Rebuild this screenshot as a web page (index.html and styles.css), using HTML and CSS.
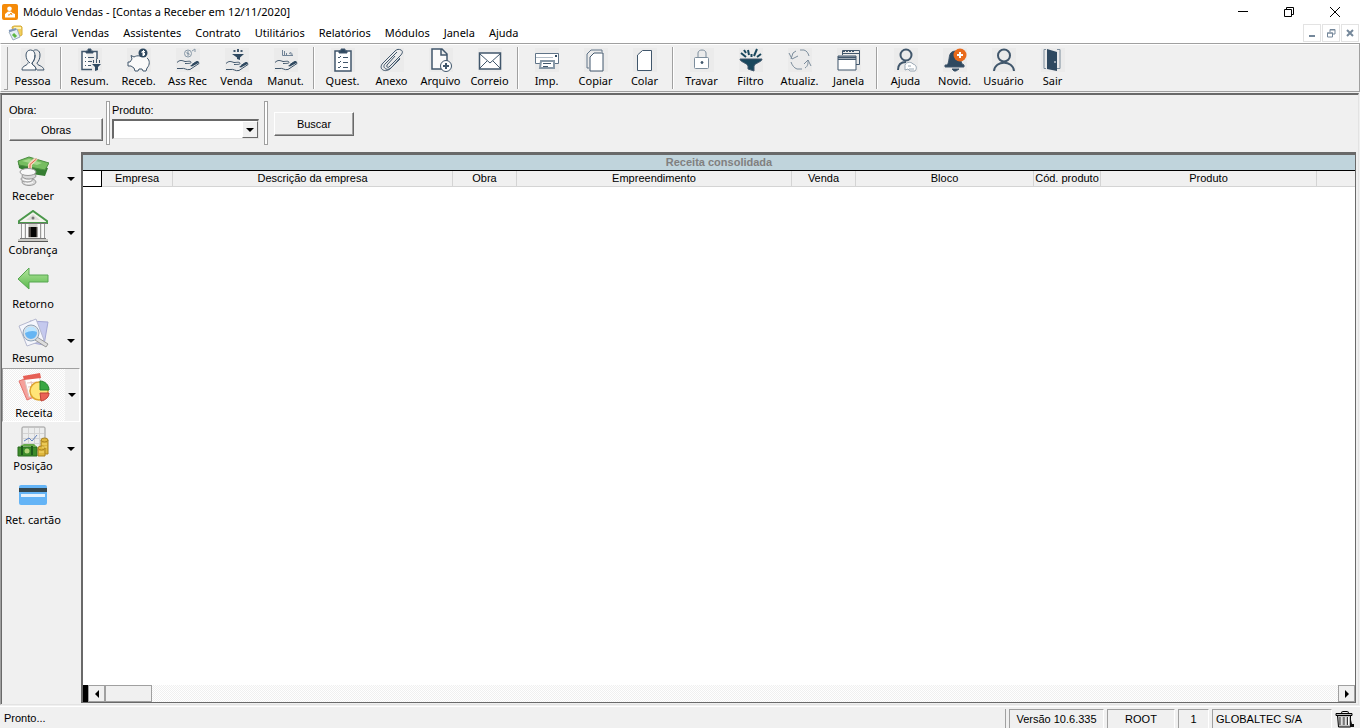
FILE: index.html
```html
<!DOCTYPE html>
<html lang="pt-BR">
<head>
  <meta charset="UTF-8">
  <meta name="viewport" content="width=device-width, initial-scale=1.0">
  <title>Módulo Vendas</title>
  <link rel="stylesheet" href="styles.css">
</head>
<body>
  <header class="titlebar">
    <svg class="app-icon" viewBox="0 0 16 16">
      <rect width="16" height="16" rx="2" fill="#f58a07"/>
      <circle cx="7.5" cy="4.8" r="2.3" fill="#fff"/>
      <path d="M3 13.500V10l3-2.600h3l1.500 1.600 2.500 1v3.500z" fill="#fff"/>
      <path d="M6 11h1.500l1.500-2 1 2" fill="none" stroke="#f58a07"/>
    </svg>
    <h1>Módulo Vendas - [Contas a Receber em 12/11/2020]</h1>
    <div class="window-buttons">
      <button aria-label="Minimizar"><svg viewBox="0 0 12 12"><path d="M1 5.500h10" /></svg></button>
      <button aria-label="Restaurar"><svg viewBox="0 0 12 12"><path d="M1.500 3.500h7v7h-7zM3.500 3.500v-2h7v7h-2"/></svg></button>
      <button aria-label="Fechar"><svg viewBox="0 0 12 12"><path d="M1 1l10 10M11 1L1 11"/></svg></button>
    </div>
  </header>

  <nav class="menubar">
    <svg class="menu-icon" viewBox="0 0 16 16">
      <path d="M4 2l2-1h7l1 1v8l-2 1H6z" fill="#f1cf5b" stroke="#d6ac3c"/>
      <path d="M6 3h7" stroke="#fff3b5" stroke-width="2"/>
      <path d="M1 7l8-3 3 8-7 3z" fill="#e4edf5" stroke="#9baebe"/>
      <path d="M1 6l7-2" stroke="#7d94b8" stroke-width="2"/>
      <path d="M5 9l3 3" stroke="#5db743" stroke-width="3"/>
    </svg>
    <a href="#">Geral</a>
    <a href="#">Vendas</a>
    <a href="#">Assistentes</a>
    <a href="#">Contrato</a>
    <a href="#">Utilitários</a>
    <a href="#">Relatórios</a>
    <a href="#">Módulos</a>
    <a href="#">Janela</a>
    <a href="#">Ajuda</a>
    <div class="child-buttons">
      <button aria-label="Minimizar janela"><svg viewBox="0 0 10 10"><path d="M2 8h6" stroke-width="2"/></svg></button>
      <button aria-label="Restaurar janela"><svg viewBox="0 0 10 10"><path d="M1.500 5h5v4h-5zM1 5h6M4 4V1.500h5V6H7M4 2h5"/></svg></button>
      <button aria-label="Fechar janela"><svg viewBox="0 0 10 10"><path d="M2 2l6 6M8 2L2 8" stroke-width="2"/></svg></button>
    </div>
  </nav>

  <div class="toolbar">
    <button class="tool">
      <svg viewBox="0 0 24 24"><path d="M9 15c-3-2-4-5-4-8 0-3 2-5 4.500-5S14 4 14 7s-1 6-3 8c0 3 4 2 4 7H1c0-5 6-4 6-7.500" fill="#fafafa"/><path d="M12.500 2.500C15 1 19 2 19 7c0 3-1 6-3 8 0 3 6 2 7 7h-7M14 7c0 4-1 6-3 8 0 3 4 2 4 7"/></svg>
      <span>Pessoa</span>
    </button>
    <i class="sep"></i>
    <button class="tool">
      <svg viewBox="0 0 24 24"><path d="M8 3.500H4v18h10M15 3.500h4V11" fill="#fafafa" stroke-width="1.500"/><path class="fill" d="M8 3h2V1h3v2h2v2H8z"/><path d="M7 9.500h1M10 9.500h6M7 13.500h1M10 13.500h4M7 17.500h1M10 17.500h3"/><path class="fill" d="M14 16h9l-3 3v3l-3 1v-4z" stroke="none"/><path d="M18.500 11v4M15.500 12v3M21.500 12v3"/></svg>
      <span>Resum.</span>
    </button>
    <button class="tool">
      <svg viewBox="0 0 24 24"><path d="M13 8c-3-.500-4 0-6 1L4 7.500 5 11l-2 3H1v4h3l3 2 1 3h3l1-2h3l1 2h3l1-3c3-3 3-8 0-10" fill="#fafafa"/><circle class="fill" cx="16" cy="5" r="4.500" stroke="none"/><path d="M18 3.500h-3v1.500h2.500v2H15M16.500 2v6" stroke="#fff"/></svg>
      <span>Receb.</span>
    </button>
    <button class="tool">
      <svg viewBox="0 0 24 24"><circle cx="12" cy="5.500" r="3.500" stroke="#8798a7"/><path d="M13 4h-2v1.500h2V7h-2M16 3l3-2v3" stroke="#8798a7"/><path d="M1 14.500c3-3 5-2 8-1 3 0 6-1 6 1 0 1-3 1-6 1M1 20.500h4c4-1 5 2 9 1l9-6c0-2-2-2-4-1l-3 2"/><path class="fill" d="M14 18l6-4.500c2-1 3 0 2.500 1.500L16 18.500z" stroke="none"/></svg>
      <span>Ass Rec</span>
    </button>
    <button class="tool">
      <svg viewBox="0 0 24 24"><path class="fill" d="M7 6h12l-4 3.500V12l-3-1V9.500z" stroke="none"/><path d="M9.500 2v2M13 1v3M16.500 2v2" stroke-width="2"/><path d="M1 15.500c3-3 5-2 8-1 3 0 6-1 6 1 0 1-3 1-6 1M1 21.500h4c4-1 5 2 9 1l9-6c0-2-2-2-4-1l-3 2"/><path class="fill" d="M14 19l6-4.500c2-1 3 0 2.500 1.500L16 19.500z" stroke="none"/></svg>
      <span>Venda</span>
    </button>
    <button class="tool">
      <svg viewBox="0 0 24 24"><path d="M8.500 2v5.500H19M10.500 3v4M12.500 5v2M15 5.500l2-1v2M18 5.500v2" stroke="#718396"/><path d="M1 14.500c3-3 5-2 8-1 3 0 6-1 6 1 0 1-3 1-6 1M1 20.500h4c4-1 5 2 9 1l9-6c0-2-2-2-4-1l-3 2"/><path class="fill" d="M14 18l6-4.500c2-1 3 0 2.500 1.500L16 18.500z" stroke="none"/></svg>
      <span>Manut.</span>
    </button>
    <i class="sep"></i>
    <button class="tool">
      <svg viewBox="0 0 24 24"><path d="M4 3h16v20H4z" fill="#fff" stroke-width="1.500"/><path class="fill" d="M8 3h2V1h4v2h2v2H8z"/><path d="M7 9l1 1 2-2M12 9.500h5M7 14l1 1 2-2M12 14.500h5M7 19l1 1 2-2M12 19.500h5"/></svg>
      <span>Quest.</span>
    </button>
    <button class="tool">
      <svg viewBox="0 0 24 24"><path d="M15 8l-8 9c-1 2 1 3 2 2L20 8c3-3 3-5 1-6s-4-1-6 1L3 15c-3 3-2 6 0 7s5 1 8-2l9-9M17 4L5 16c-2 2-1 4 1 5s4 0 6-2l8-9"/></svg>
      <span>Anexo</span>
    </button>
    <button class="tool">
      <svg viewBox="0 0 24 24"><path d="M3 1h10l5 5v15H3zM12 1v6h6" fill="#fafafa" stroke-width="1.500"/><circle cx="17" cy="18" r="5.500" fill="#fff"/><path d="M14 18h6M17 15v6" stroke-width="2"/></svg>
      <span>Arquivo</span>
    </button>
    <button class="tool">
      <svg viewBox="0 0 24 24"><path d="M1.500 5h21v16h-21z" fill="#fff" stroke-width="1.500"/><path d="M2 6l10 9L22 6M2 20l7-7M22 20l-7-7"/></svg>
      <span>Correio</span>
    </button>
    <i class="sep"></i>
    <button class="tool">
      <svg viewBox="0 0 24 24"><path d="M5 15.500H.500v-10h23v10H19" fill="#fff" stroke="#607488"/><path d="M1 9.500h17" stroke="#b2bdc7"/><path class="fill" d="M20 7h2v2h-2z" stroke="none"/><path d="M6 13h13v7H5z" fill="#fff" stroke="#8798a7" stroke-width="2"/><path d="M8 15.500h8M8 18.500h5"/></svg>
      <span>Imp.</span>
    </button>
    <button class="tool">
      <svg viewBox="0 0 24 24"><path d="M5 20H3V6l4-4h11v2" stroke="#607488"/><path d="M6 9l4-4h9v18H6z" fill="#fff"/></svg>
      <span>Copiar</span>
    </button>
    <button class="tool">
      <svg viewBox="0 0 24 24"><path d="M4.500 7l5-4.500h9v20h-14z" fill="#fff"/></svg>
      <span>Colar</span>
    </button>
    <i class="sep"></i>
    <button class="tool">
      <svg viewBox="0 0 24 24"><path d="M8 10V5c0-4 8-4 8 0v5" stroke="#7c8d9c"/><rect x="4.500" y="9.500" width="14" height="11" rx="1" fill="#fff" stroke="#7c8d9c"/><circle class="fill" cx="12" cy="14.500" r="1"/></svg>
      <span>Travar</span>
    </button>
    <button class="tool">
      <svg viewBox="0 0 24 24"><path d="M1 11h22c0 3-7 4-8 7v5l-6-2v-3c-1-3-8-4-8-7z" fill="#18475d"/><path d="M2 5l5 4M9 2l1 5M12.500 6v3M18 1l-3 7M22 6l-4 3M5 2l2 3" stroke="#18475d" stroke-width="2"/></svg>
      <span>Filtro</span>
    </button>
    <button class="tool">
      <svg viewBox="0 0 24 24"><path d="M12 2h4c3 1 4 3 5 6M8 3L5 5l-2 6M1 5l3 6 6-3M3 14c1 3 3 6 6 7h5M17 20c3-2 3-4 3-8M16 16l4-4 3 6" stroke="#7c8d9c"/></svg>
      <span>Atualiz.</span>
    </button>
    <button class="tool">
      <svg viewBox="0 0 24 24"><path d="M5.500 7V2.500h17v14H19M6 5.500h17"/><path d="M6 3.500h12" stroke-dasharray="2 1"/><path d="M1 8h18v14H1z" fill="#fff"/><path d="M1 9.500h18" stroke-width="2"/><path d="M1 11.500h18"/></svg>
      <span>Janela</span>
    </button>
    <i class="sep"></i>
    <button class="tool">
      <svg viewBox="0 0 24 24"><circle cx="12" cy="7" r="5.500" stroke-width="2"/><path d="M4 22c0-6 3-8 8-8" stroke-width="2"/><path d="M11 19c-1-5 6-6 8-3 4 1 4 5 2 7h-5l-2-2-3 1zM14 18h3M15 21h5" fill="#fff" stroke="#9aa8b4"/></svg>
      <span>Ajuda</span>
    </button>
    <button class="tool">
      <svg viewBox="0 0 24 24"><path class="fill" d="M4 17c3-3 1-11 5-13 5-3 9 2 9 8 0 3 1 4 3 5v2H2v-2zM9 21h7l-3 2h-2z"/><circle cx="17" cy="7" r="6.500" fill="#e86a1c" stroke="none"/><path d="M14 7h6M17 4v6" stroke="#fff" stroke-width="2"/></svg>
      <span>Novid.</span>
    </button>
    <button class="tool">
      <svg viewBox="0 0 24 24"><circle cx="12" cy="7.500" r="6" stroke-width="2"/><path d="M2 23c1-11 19-11 20 0" stroke-width="2"/></svg>
      <span>Usuário</span>
    </button>
    <button class="tool">
      <svg viewBox="0 0 24 24"><path class="fill" d="M6 1l10 3v19L6 21z" stroke="none"/><path d="M14 13v2" stroke="#fff"/><path d="M5 1.500H3v19h2M16 1.500h3v19h-3" stroke="#7c8d9c"/></svg>
      <span>Sair</span>
    </button>
  </div>

  <div class="workspace">
    <form class="filters" onsubmit="return false">
      <div class="field obra">
        <label for="obras">Obra:</label>
        <button type="button" class="raised" id="obras">Obras</button>
      </div>
      <i class="divider"></i>
      <div class="field produto">
        <label for="produto">Produto:</label>
        <span class="combo">
          <select id="produto"><option></option></select>
          <span class="combo-button"><i class="arrow down"></i></span>
        </span>
      </div>
      <i class="divider"></i>
      <button class="raised search">Buscar</button>
    </form>

    <div class="content">
      <aside class="sidebar">
        <div class="side-item">
          <button class="side-main">
            <svg viewBox="0 0 32 32">
              <path d="M1 5l30 7-3 8-13-2L2 12z" fill="#367e32"/>
              <path d="M1 5l11-4 20 6-4 7L2 9z" fill="#76bd60" stroke="#4b8d41"/>
              <path d="M5 5l7-2 13 4-5 2z" fill="#a5d98c"/>
              <path d="M17 2l4 1-6 6v6l-4-1V8z" fill="#f5d5c0"/><path d="M19.500 3L13 8.500v6" stroke="#df6847" fill="none"/>
              <g fill="#d9d9d9" stroke="#999"><ellipse cx="12" cy="26" rx="7" ry="3.500"/><ellipse cx="10" cy="23" rx="6" ry="3"/><ellipse cx="12" cy="20" rx="7" ry="3"/><ellipse cx="11" cy="16" rx="8" ry="3.500" fill="#f8f8f8"/></g>
              <path d="M6 23c2 2 6 2 8 1M8 27c3 1 7 0 8-1" stroke="#fff" fill="none"/>
            </svg>
            <span>Receber</span>
          </button>
          <button class="side-more" aria-label="Mais opções de Receber"><i class="arrow down"></i></button>
        </div>
        <div class="side-item">
          <button class="side-main">
            <svg viewBox="0 0 32 32">
              <path d="M2 11L16 1l14 10v2H2z" fill="#f4f4ef" stroke="#4b984b" stroke-width="2"/>
              <path d="M9 10l7-6 7 6z" fill="#deded9"/><circle cx="16" cy="8" r="1.500" fill="#777"/>
              <path d="M4 14h24v14H4z" fill="#d2d2cd"/>
              <path d="M11 17h10v10H11z" fill="#47423e"/><path d="M14 17h5v10h-5z" fill="#050505"/>
              <path d="M6 14v14M10 14v14M22 14v14M26 14v14" stroke="#fafafa" stroke-width="3"/>
              <path d="M4.500 14v14M8.500 14v14M23.500 14v14M27.500 14v14" stroke="#999"/>
              <path d="M2 13.500h28M3 28.500h26" stroke="#777"/><path d="M1 30h30" stroke="#c9c9c5" stroke-width="2"/><path d="M1 31.500h30" stroke="#555"/>
            </svg>
            <span>Cobrança</span>
          </button>
          <button class="side-more" aria-label="Mais opções de Cobrança"><i class="arrow down"></i></button>
        </div>
        <div class="side-item">
          <button class="side-main">
            <svg viewBox="0 0 32 32">
              <defs><linearGradient id="green" x2="0" y2="1"><stop stop-color="#b6e6a0"/><stop offset="1" stop-color="#58b94b"/></linearGradient></defs>
              <path d="M1 15L12 4v7h19v7H12v7z" fill="url(#green)" stroke="#56a650"/>
            </svg>
            <span>Retorno</span>
          </button>
        </div>
        <div class="side-item">
          <button class="side-main">
            <svg viewBox="0 0 32 32">
              <path d="M13 3l18 1-4 23-17-3z" fill="#c5c9ee" stroke="#a4a7d5"/>
              <path d="M2 8L19 1l8 21-17 6z" fill="#f5f6fc" stroke="#b5b9cf"/>
              <path d="M20 19l11 7-2 3-11-7z" fill="#ddd" stroke="#999"/>
              <circle cx="14" cy="15" r="7" fill="#66b5f3" stroke="#dbe1e7" stroke-width="2"/>
              <circle cx="14" cy="15" r="8" fill="none" stroke="#90a4b8"/>
              <path d="M8 15c0-8 11-8 12-1-4-2-8-1-12 1z" fill="#bde5ff"/>
            </svg>
            <span>Resumo</span>
          </button>
          <button class="side-more" aria-label="Mais opções de Resumo"><i class="arrow down"></i></button>
        </div>
        <div class="side-item active">
          <button class="side-main">
            <svg viewBox="0 0 32 32">
              <path d="M1 8l14-5 6 19-12 5z" fill="#f5a19b" stroke="#e3746e"/>
              <path d="M6 4l15-2 4 20-14 2z" fill="#fff" stroke="#d8c7c4"/>
              <path d="M5 3L22 0l1 5L6 7z" fill="#e65f55"/>
              <path d="M9 10l10-1M10 14l9-1M11 18l7-1M13 8l2 13" stroke="#e6c5bf"/>
              <circle cx="21" cy="18" r="9" fill="#ffe578" stroke="#dda42e" stroke-width="1.500"/>
              <path d="M22 17V8c5 0 9 4 9 9z" fill="#38a743" stroke="#23842d"/>
              <path d="M22 20h9c0 4-3 7-8 8z" fill="#ea6355" stroke="#bd4038"/>
            </svg>
            <span>Receita</span>
          </button>
          <button class="side-more" aria-label="Mais opções de Receita"><i class="arrow down"></i></button>
        </div>
        <div class="side-item">
          <button class="side-main">
            <svg viewBox="0 0 32 32">
              <rect x="5" y="1" width="23" height="23" rx="1" fill="#eceded" stroke="#999"/>
              <path d="M6 7.500h21M6 12.500h21M6 17.500h21M11.500 2v21M17.500 2v21M22.500 2v21" stroke="#d3d3d3"/>
              <path d="M7 15l5-3 3 3 5-6" fill="none" stroke="#607fbc"/>
              <path d="M1 21h19v9H1z" fill="#3c8c2b" stroke="#286a1f"/><path d="M3 20l4-2h10l3 3" fill="#65aa49"/>
              <circle cx="10" cy="25" r="2.500" fill="#b3d57b"/><path d="M5 20v9M15 20v9" stroke="#1e5c1d" stroke-width="2"/>
              <g fill="#dfb73d" stroke="#a88121"><path d="M24 14h7v14h-7z"/><ellipse cx="27.500" cy="14" rx="3.500" ry="2"/><path d="M21 22h7v8h-7z"/><ellipse cx="24.500" cy="22" rx="3.500" ry="2"/></g>
              <path d="M25 18h5M25 21h5M22 26h5" stroke="#f7db75"/>
            </svg>
            <span>Posição</span>
          </button>
          <button class="side-more" aria-label="Mais opções de Posição"><i class="arrow down"></i></button>
        </div>
        <div class="side-item">
          <button class="side-main">
            <svg viewBox="0 0 32 32">
              <rect x="2" y="5" width="28" height="20" rx="2" fill="#64b4f6"/>
              <path d="M2 8h28v4H2z" fill="#35474f"/><path d="M4 14h24v3H4z" fill="#e5f2fd"/>
            </svg>
            <span>Ret. cartão</span>
          </button>
        </div>
      </aside>

      <main class="panel">
        <table class="grid">
          <caption>Receita consolidada</caption>
          <colgroup>
            <col class="w-mark"><col class="w-company"><col class="w-desc"><col class="w-short"><col class="w-project">
            <col class="w-short"><col class="w-block"><col class="w-code"><col class="w-product"><col>
          </colgroup>
          <thead>
            <tr>
              <th class="marker"></th>
              <th>Empresa</th>
              <th>Descrição da empresa</th>
              <th>Obra</th>
              <th>Empreendimento</th>
              <th>Venda</th>
              <th>Bloco</th>
              <th>Cód. produto</th>
              <th>Produto</th>
              <th></th>
            </tr>
          </thead>
        </table>
        <div class="scrollbar">
          <i class="split"></i>
          <button aria-label="Rolar para a esquerda"><i class="arrow left"></i></button>
          <i class="thumb"></i>
          <button class="last" aria-label="Rolar para a direita"><i class="arrow right"></i></button>
        </div>
      </main>
    </div>
  </div>

  <footer class="statusbar">
    <span class="message">Pronto...</span>
    <span class="cell version">Versão 10.6.335</span>
    <span class="cell user">ROOT</span>
    <span class="cell number">1</span>
    <span class="cell company">GLOBALTEC S/A</span>
    <button class="trash" aria-label="Lixeira">
      <svg viewBox="0 0 20 18">
        <path d="M6 2.500l2-1h4l2 1" fill="none" stroke="#000"/>
        <path d="M1 3.500h16v2H1z" fill="#bbb" stroke="#000"/>
        <path d="M2.500 5.500h13V17h-12z" fill="#c0c0c0" stroke="#000"/>
        <path d="M6 7v8M10 7v8M13.500 7v8" stroke="#fff"/><path d="M5 7v8M9 7v8M12.500 7v8" stroke="#333"/>
        <path d="M15 6l2 8h2v3h-4z" fill="#111"/>
      </svg>
    </button>
  </footer>
</body>
</html>
```
FILE: styles.css
```css
* {
  box-sizing: border-box;
}

body {
  display: flex;
  flex-direction: column;
  height: 100vh;
  margin: 0;
  overflow: hidden;
  color: #000;
  background-color: #f0f0f0;
  font-family: "Noto Sans", "Open Sans", sans-serif;
  font-size: 11px;
  line-height: 16px;
}

button {
  padding: 0;
  border: 0;
  color: inherit;
  background: none;
  font: inherit;
}

svg, i {
  display: block;
  flex: none;
}

/* title and menu */
.titlebar {
  display: flex;
  align-items: center;
  height: 23px;
  padding: 0 2px;
  background-color: #fff;
}

.app-icon {
  width: 16px;
  height: 16px;
}

h1 {
  flex: 1;
  margin: 0 0 0 5px;
  font-size: 11px;
  font-weight: normal;
}

.window-buttons {
  display: flex;
}

.window-buttons button {
  display: flex;
  align-items: center;
  justify-content: center;
  width: 46px;
  height: 20px;
}

.window-buttons svg {
  width: 12px;
  height: 12px;
  fill: none;
  stroke: #000;
}

.menubar {
  display: flex;
  align-items: center;
  gap: 14px;
  height: 20px;
  padding: 0 1px 0 8px;
  background-color: #fff;
}

.menu-icon {
  width: 16px;
  height: 16px;
  margin-right: -8px;
}

.menubar a {
  color: inherit;
  text-decoration: none;
}

.child-buttons {
  display: flex;
  gap: 1px;
  margin-left: auto;
}

.child-buttons button {
  display: flex;
  align-items: center;
  justify-content: center;
  width: 18px;
  height: 18px;
  border: 1px solid #e3e3e3;
}

.child-buttons svg {
  width: 10px;
  height: 10px;
  fill: none;
  stroke: #74879a;
}

/* toolbar */
.toolbar {
  display: flex;
  height: 49px;
  padding: 2px 0 0 7px;
  border: 1px solid #a0a0a0;
  border-left-color: #fff;
  box-shadow: inset 0 1px #fff;
}

.toolbar::before {
  content: "";
  width: 3px;
  height: 42px;
  margin: 1px 0 0 -4px;
  border: 1px solid #a0a0a0;
  border-width: 0 1px 1px 0;
}

.tool {
  display: flex;
  flex-direction: column;
  align-items: center;
  width: 49px;
  white-space: nowrap;
}

.tool svg {
  width: 24px;
  height: 24px;
  margin: 2px 0 1px;
  background-color: #ebebeb;
  fill: none;
  stroke: #41576c;
}

.tool .fill {
  fill: #2f4960;
}

.sep {
  width: 2px;
  height: 42px;
  margin: 1px 3px 0;
  border-left: 1px solid #a0a0a0;
  border-right: 1px solid #fff;
}

/* child window */
.workspace {
  display: flex;
  flex: 1;
  flex-direction: column;
  min-height: 0;
  margin: 1px 1px 1px 0;
  padding-right: 2px;
  border: 1px solid #a0a0a0;
  border-top: 2px solid #696969;
  border-right-color: #e3e3e3;
  border-bottom-color: #e3e3e3;
  box-shadow: inset 1px 0 #696969;
}

.filters {
  display: flex;
  align-items: flex-start;
  height: 57px;
  padding: 6px 0 0 8px;
  font-family: "Liberation Sans", sans-serif;
  font-size: 11px;
}

.field {
  display: flex;
  flex-direction: column;
}

.field label {
  height: 17px;
  line-height: 18px;
}

.obra {
  width: 94px;
}

.produto {
  width: 147px;
}

.raised {
  height: 23px;
  border: 1px solid #fff;
  border-right-color: #696969;
  border-bottom-color: #696969;
  box-shadow: inset -1px -1px #a0a0a0;
}

.search {
  width: 80px;
  height: 24px;
  margin: 11px 0 0 4px;
}

.divider {
  width: 4px;
  height: 44px;
  margin: 0 2px 0 3px;
  border: 1px solid #a0a0a0;
  background-color: #fff;
}

.produto + .divider {
  margin-left: 5px;
}

.combo {
  position: relative;
  display: flex;
  height: 20px;
  margin-top: 1px;
}

.combo select {
  width: 100%;
  border: 2px solid #696969;
  border-right: 1px solid #e3e3e3;
  border-bottom: 1px solid #e3e3e3;
  border-radius: 0;
  background-color: #fff;
  font: inherit;
  appearance: none;
}

.combo-button {
  position: absolute;
  top: 2px;
  right: 1px;
  display: flex;
  align-items: center;
  justify-content: center;
  width: 16px;
  height: 17px;
  border: 1px solid #fff;
  border-right-color: #696969;
  border-bottom-color: #696969;
  background-color: #f0f0f0;
  pointer-events: none;
}

.arrow {
  width: 0;
  height: 0;
  border: 4px solid transparent;
}

.arrow.down {
  border-top-color: #000;
  border-bottom: 0;
}

.arrow.left {
  border-right-color: #000;
  border-left: 0;
}

.arrow.right {
  border-left-color: #000;
  border-right: 0;
}

.content {
  display: flex;
  flex: 1;
  min-height: 0;
}

/* sidebar */
.sidebar {
  width: 80px;
  padding: 0 1px;
}

.side-item {
  display: flex;
  height: 54px;
}

.side-main {
  display: flex;
  flex-direction: column;
  align-items: center;
  width: 62px;
  padding-top: 4px;
  white-space: nowrap;
}

.side-main svg {
  width: 32px;
  height: 32px;
}

.side-more {
  display: flex;
  flex: 1;
  align-items: center;
  justify-content: center;
  padding-right: 2px;
}

.side-item.active {
  border: 1px solid #a0a0a0;
  border-right-color: #fff;
  border-bottom-color: #fff;
}

.active .side-main {
  background: repeating-conic-gradient(#fff 0 25%, #f0f0f0 0 50%) 0 0 / 2px 2px;
}

.active .side-more {
  padding-right: 0;
}

/* grid */
.panel {
  display: flex;
  flex: 1;
  flex-direction: column;
  min-width: 0;
  margin-bottom: 1px;
  border: 2px solid #696969;
  border-top-width: 3px;
  border-right-width: 1px;
  border-bottom-width: 1px;
  background-color: #fff;
  font-family: "Liberation Sans", sans-serif;
  font-size: 11px;
}

.grid {
  width: 100%;
  border-spacing: 0;
  table-layout: fixed;
}

.grid caption {
  height: 16px;
  border-bottom: 1px solid #000;
  color: #808080;
  background-color: #c0d4dc;
  font-weight: bold;
  line-height: 15px;
}

.grid th {
  height: 16px;
  padding: 0;
  border: 1px solid #d4d4d4;
  border-width: 0 1px 1px 0;
  background-color: #f0f0f0;
  font-weight: normal;
  line-height: 15px;
  white-space: nowrap;
}

.grid th:last-child {
  border-right: 0;
}

.grid .marker {
  border-color: #000;
  background-color: #fff;
}

.w-mark { width: 19px; }
.w-company { width: 71px; }
.w-desc { width: 280px; }
.w-short { width: 64px; }
.w-project { width: 275px; }
.w-block { width: 178px; }
.w-code { width: 67px; }
.w-product { width: 216px; }

.scrollbar {
  display: flex;
  height: 17px;
  margin-top: auto;
  background: repeating-conic-gradient(#fff 0 25%, #f0f0f0 0 50%) 0 0 / 2px 2px;
}

.scrollbar button {
  display: flex;
  align-items: center;
  justify-content: center;
  width: 17px;
  border: 1px solid #a0a0a0;
  background-color: #f0f0f0;
}

.split {
  width: 5px;
  background-color: #000;
}

.thumb {
  width: 47px;
  border: 1px solid #a0a0a0;
  background-color: #f0f0f0;
}

.scrollbar .last {
  margin-left: auto;
}

/* status bar */
.statusbar {
  display: flex;
  height: 22px;
  padding: 2px 5px 0 4px;
  border-top: 1px solid #fff;
  font-family: "Liberation Sans", sans-serif;
  font-size: 11px;
  line-height: 18px;
}

.message {
  flex: 1;
  margin-right: 3px;
  border-right: 1px solid #a0a0a0;
}

.cell {
  margin-right: 3px;
  border: 1px solid #a0a0a0;
  border-width: 1px 1px 0 1px;
  border-right-color: #fff;
  text-align: center;
}

.version { width: 95px; }
.user { width: 68px; }
.number { width: 31px; }

.company {
  width: 120px;
  padding-left: 3px;
  text-align: left;
}

.trash svg {
  width: 20px;
  height: 18px;
}
```
